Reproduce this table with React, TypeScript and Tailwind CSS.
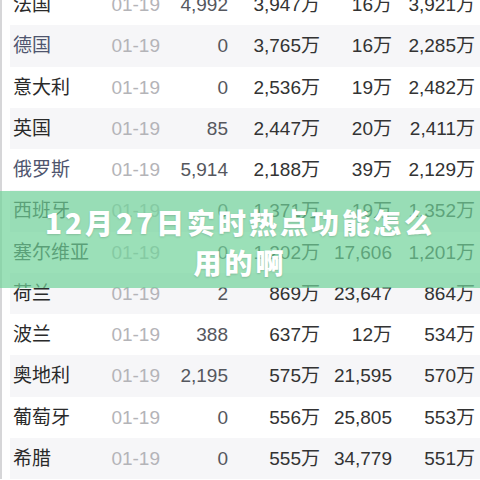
const rows = [
  { name: '法国', c3: '4,992', c4: '3,947万', c5: '16万', c6: '3,921万' },
  { name: '德国', c3: '0', c4: '3,765万', c5: '16万', c6: '2,285万', blue: true },
  { name: '意大利', c3: '0', c4: '2,536万', c5: '19万', c6: '2,482万' },
  { name: '英国', c3: '85', c4: '2,447万', c5: '20万', c6: '2,411万' },
  { name: '俄罗斯', c3: '5,914', c4: '2,188万', c5: '39万', c6: '2,129万', blue: true },
  { name: '西班牙', c3: '0', c4: '1,371万', c5: '19万', c6: '1,352万' },
  { name: '塞尔维亚', c3: '0', c4: '1,202万', c5: '17,606', c6: '1,201万' },
  { name: '荷兰', c3: '2', c4: '869万', c5: '23,647', c6: '864万' },
  { name: '波兰', c3: '388', c4: '637万', c5: '12万', c6: '534万' },
  { name: '奥地利', c3: '2,195', c4: '575万', c5: '21,595', c6: '570万' },
  { name: '葡萄牙', c3: '0', c4: '556万', c5: '25,805', c6: '553万' },
  { name: '希腊', c3: '0', c4: '555万', c5: '34,779', c6: '551万' },
];

export default function App() {
  return (
    <div
      className="relative w-[480px] h-[480px] overflow-hidden bg-white"
      style={{ fontFamily: '"Liberation Sans", "Noto Sans CJK SC", sans-serif' }}
    >
      <div className="border-l-[2px] border-[#d6d6d8] pl-[8px] -mt-[16px]">
        {rows.map((r, i) => (
          <div
            key={r.name}
            className={`grid grid-cols-[87px_60px_68px_92px_72px_83px] items-center h-[41.25px] pl-[3px] text-[19px] leading-none ${
              i % 2 === 1 ? 'bg-[#f6f6f8]' : 'bg-white'
            }`}
          >
            <span className={r.blue ? 'text-[#4f556e]' : 'text-[#2a2a2a]'}>{r.name}</span>
            <span className="text-right text-[#b4b4b8]">01-19</span>
            <span className="text-right text-[#55575e]">{r.c3}</span>
            <span className="text-right text-[#333]">{r.c4}</span>
            <span className="text-right text-[#333]">{r.c5}</span>
            <span className="text-right text-[#333]">{r.c6}</span>
          </div>
        ))}
      </div>

      {/* title banner over the table */}
      <div className="absolute left-0 right-0 top-[191px] h-[97px] bg-[#70d39a]/70 flex items-center justify-center">
        <div
          className="text-center text-white font-black text-[28px] leading-[40px] tracking-[3px] pt-[5px] [text-shadow:0_1px_2px_rgba(0,0,0,0.15)]"
          style={{ fontFamily: '"Noto Sans CJK SC", "Noto Sans", sans-serif' }}
        >
          <div>12月27日实时热点功能怎么</div>
          <div>用的啊</div>
        </div>
      </div>
    </div>
  );
}
